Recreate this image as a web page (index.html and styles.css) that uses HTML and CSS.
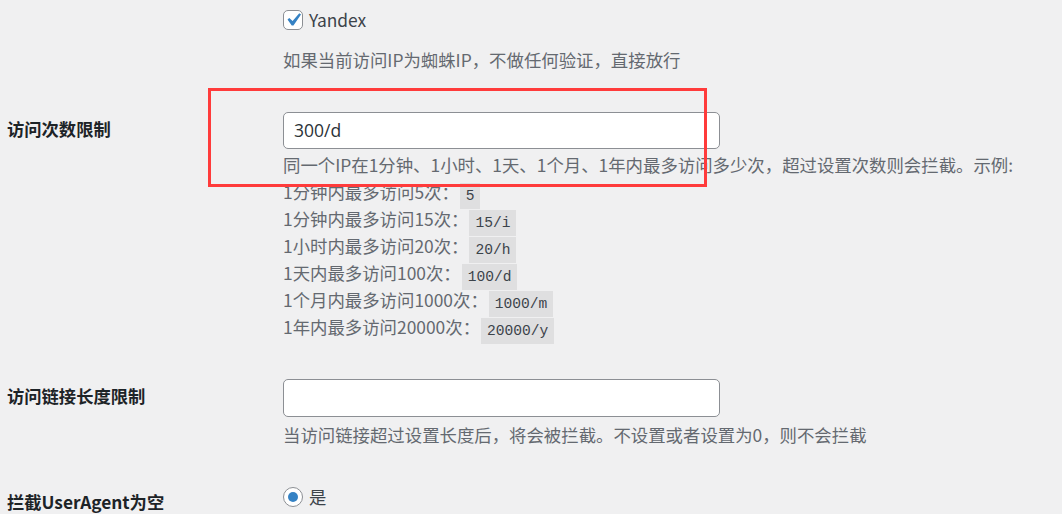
FILE: index.html
```html
<!DOCTYPE html>
<html lang="zh-CN">
<head>
<meta charset="utf-8">
<title>设置</title>
<link rel="stylesheet" href="styles.css">
</head>
<body>
<div class="wrap">
  <div class="form-row row-spider">
    <div class="th"></div>
    <div class="td">
      <label class="check-label">
        <span class="checkbox checked">
          <svg viewBox="0 0 20 20" width="20" height="20"><path d="M14.83 4.89l1.34.94-5.81 8.38H9.02L5.78 9.67l1.34-1.25 2.57 2.4z" fill="#3582c4"/></svg>
        </span>
        <span>Yandex</span>
      </label>
      <p class="description desc-spider">如果当前访问IP为蜘蛛IP，不做任何验证，直接放行</p>
    </div>
  </div>

  <div class="form-row row-limit">
    <div class="th">访问次数限制</div>
    <div class="td">
      <div class="input">300/d</div>
      <div class="description desc-limit">
        <div class="line first">同一个IP在1分钟、1小时、1天、1个月、1年内最多访问多少次，超过设置次数则会拦截。示例:</div>
        <div class="line">1分钟内最多访问5次： <code>5</code></div>
        <div class="line">1分钟内最多访问15次： <code>15/i</code></div>
        <div class="line">1小时内最多访问20次： <code>20/h</code></div>
        <div class="line">1天内最多访问100次： <code>100/d</code></div>
        <div class="line">1个月内最多访问1000次： <code>1000/m</code></div>
        <div class="line">1年内最多访问20000次： <code>20000/y</code></div>
      </div>
    </div>
  </div>

  <div class="form-row row-length">
    <div class="th">访问链接长度限制</div>
    <div class="td">
      <div class="input tall"></div>
      <p class="description desc-length">当访问链接超过设置长度后，将会被拦截。不设置或者设置为0，则不会拦截</p>
    </div>
  </div>

  <div class="form-row row-ua">
    <div class="th">拦截UserAgent为空</div>
    <div class="td">
      <label class="radio-label"><span class="radio"><span class="dot"></span></span><span>是</span></label>
    </div>
  </div>

  <div class="annotation"></div>
</div>
</body>
</html>
```
FILE: styles.css
```css
* { box-sizing: border-box; }
html, body {
  margin: 0;
  padding: 0;
  background: #f0f0f1;
  height: 514px;
  overflow: hidden;
}
body {
  font-family: "Noto Sans CJK SC", "Noto Sans", sans-serif;
  font-size: 17.4px;
  color: #3c434a;
}
.wrap {
  position: relative;
  padding-left: 7px;
}
.form-row {
  display: grid;
  grid-template-columns: 276px 440px;
}
.th {
  font-weight: 700;
  color: #1d2327;
  font-size: 17.3px;
  line-height: 23px;
  padding-top: 23px;
}
.td {
  padding-top: 18px;
  padding-bottom: 19px;
}
.row-spider .td { padding-top: 9px; }
.row-limit .td { padding-bottom: 21px; }
.check-label, .radio-label {
  display: flex;
  align-items: center;
  gap: 6px;
  line-height: 22px;
  color: #3c434a;
}
.checkbox {
  width: 20px;
  height: 20px;
  border: 1px solid #8c8f94;
  border-radius: 5px;
  background: #fff;
  display: flex;
  align-items: center;
  justify-content: center;
}
.checkbox svg { width: 26px; height: 26px; flex: none; }
.description {
  margin: 0;
  color: #646970;
  line-height: 26px;
  white-space: nowrap;
}
.desc-spider { margin-top: 16px; }
.row-spider .td { padding-bottom: 21px; }
.input {
  width: 437px;
  height: 37px;
  border: 1px solid #8c8f94;
  border-radius: 5px;
  background: #fff;
  color: #2c3338;
  padding: 0 10px;
  line-height: 35px;
  font-family: "Open Sans", "Noto Sans", sans-serif;
  font-size: 17.5px;
}
.input.tall { height: 38px; }
.desc-limit { margin-top: 2px; }
.desc-limit .line { height: 27px; line-height: 27px; }
code {
  font-family: "Liberation Mono", "DejaVu Sans Mono", monospace;
  font-size: 14.6px;
  line-height: 1;
  background: rgba(0,0,0,.07);
  color: #3c434a;
  padding: 5px 6px 5px;
  margin-left: -3px;
  vertical-align: -1px;
}
.desc-length { margin-top: 5px; }
.radio {
  width: 20px;
  height: 20px;
  border: 1px solid #8c8f94;
  border-radius: 50%;
  background: #fff;
  display: flex;
  align-items: center;
  justify-content: center;
}
.radio .dot {
  width: 10px;
  height: 10px;
  border-radius: 50%;
  background: #3582c4;
}
.radio-label { margin-top: 1px; }
.annotation {
  position: absolute;
  left: 208px;
  top: 88px;
  width: 499px;
  height: 99px;
  border: 3px solid #ff3b3b;
  pointer-events: none;
}
```
